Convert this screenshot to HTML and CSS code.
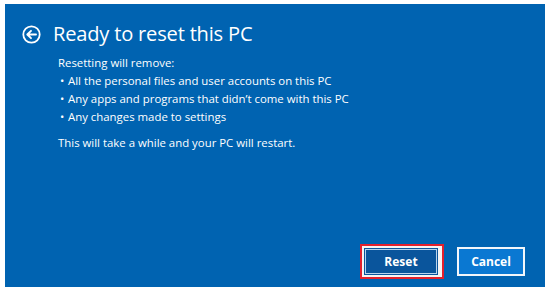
FILE: index.html
```html
<!DOCTYPE html>
<html>
<head>
<meta charset="utf-8">
<link rel="stylesheet" href="styles.css">
</head>
<body>
<div class="panel">
  <div class="header">
    <svg class="back" width="19" height="19" viewBox="0 0 19 19">
      <circle cx="9.5" cy="9.5" r="8.2" fill="none" stroke="#fff" stroke-width="1.8"/>
      <path d="M14 9.5H5.5M9 5.8L5.3 9.5 9 13.2" fill="none" stroke="#fff" stroke-width="1.9" stroke-linecap="round" stroke-linejoin="round"/>
    </svg>
    <h1 class="title">Ready to reset this PC</h1>
  </div>
  <div class="content">
    <p class="lead">Resetting will remove:</p>
    <ul class="list">
      <li>All the personal files and user accounts on this PC</li>
      <li>Any apps and programs that didn’t come with this PC</li>
      <li>Any changes made to settings</li>
    </ul>
    <p class="note">This will take a while and your PC will restart.</p>
  </div>
  <div class="actions">
    <div class="focus-box"><button class="btn btn-reset">Reset</button></div>
    <button class="btn btn-cancel">Cancel</button>
  </div>
</div>
</body>
</html>
```
FILE: styles.css
```css
html, body {
  margin: 0;
  padding: 0;
  background: #ffffff;
}
body {
  font-family: "Open Sans", "Noto Sans", "Liberation Sans", sans-serif;
  color: #ffffff;
}
.panel {
  margin: 4px 0 0 5px;
  width: 540px;
  height: 283px;
  background: #0063b1;
  display: flex;
  flex-direction: column;
  box-sizing: border-box;
}
.header {
  display: flex;
  align-items: center;
  padding: 17px 0 0 17px;
  gap: 12px;
}
.back {
  display: block;
  flex: none;
}
.title {
  margin: 0;
  font-size: 20.1px;
  font-weight: 400;
  line-height: 26px;
  letter-spacing: -0.2px;
}
.content {
  padding: 7px 0 0 53px;
  font-size: 11.4px;
  line-height: 18px;
  flex: 1;
}
.lead {
  margin: 0;
}
.list {
  margin: 0;
  padding: 0;
  list-style: none;
}
.list li {
  position: relative;
  padding-left: 10px;
  line-height: 18px;
}
.list li::before {
  content: "•";
  position: absolute;
  left: 2px;
  top: 0;
}
.note {
  margin: 8px 0 0 0;
}
.actions {
  display: flex;
  justify-content: flex-end;
  align-items: center;
  gap: 13px;
  padding: 0 20px 8px 0;
}
.focus-box {
  border: 2px solid #e3202c;
  background: #f4f4f4;
  width: 84px;
  height: 35px;
  box-sizing: border-box;
  display: flex;
  padding: 2px 4px 2px 2px;
}
.btn {
  font-family: "Open Sans", "Noto Sans", "Liberation Sans", sans-serif;
  font-weight: 700;
  font-size: 12px;
  color: #ffffff;
  cursor: pointer;
  box-sizing: border-box;
}
.btn-reset {
  flex: 1;
  background: #0a559c;
  border: 2px solid #0a559c;
  outline: 1px solid #b9d3ec;
  outline-offset: -2px;
}
.btn-cancel {
  width: 68px;
  height: 29px;
  background: #0a78d2;
  border: 2px solid #f2f6fa;
}
```
